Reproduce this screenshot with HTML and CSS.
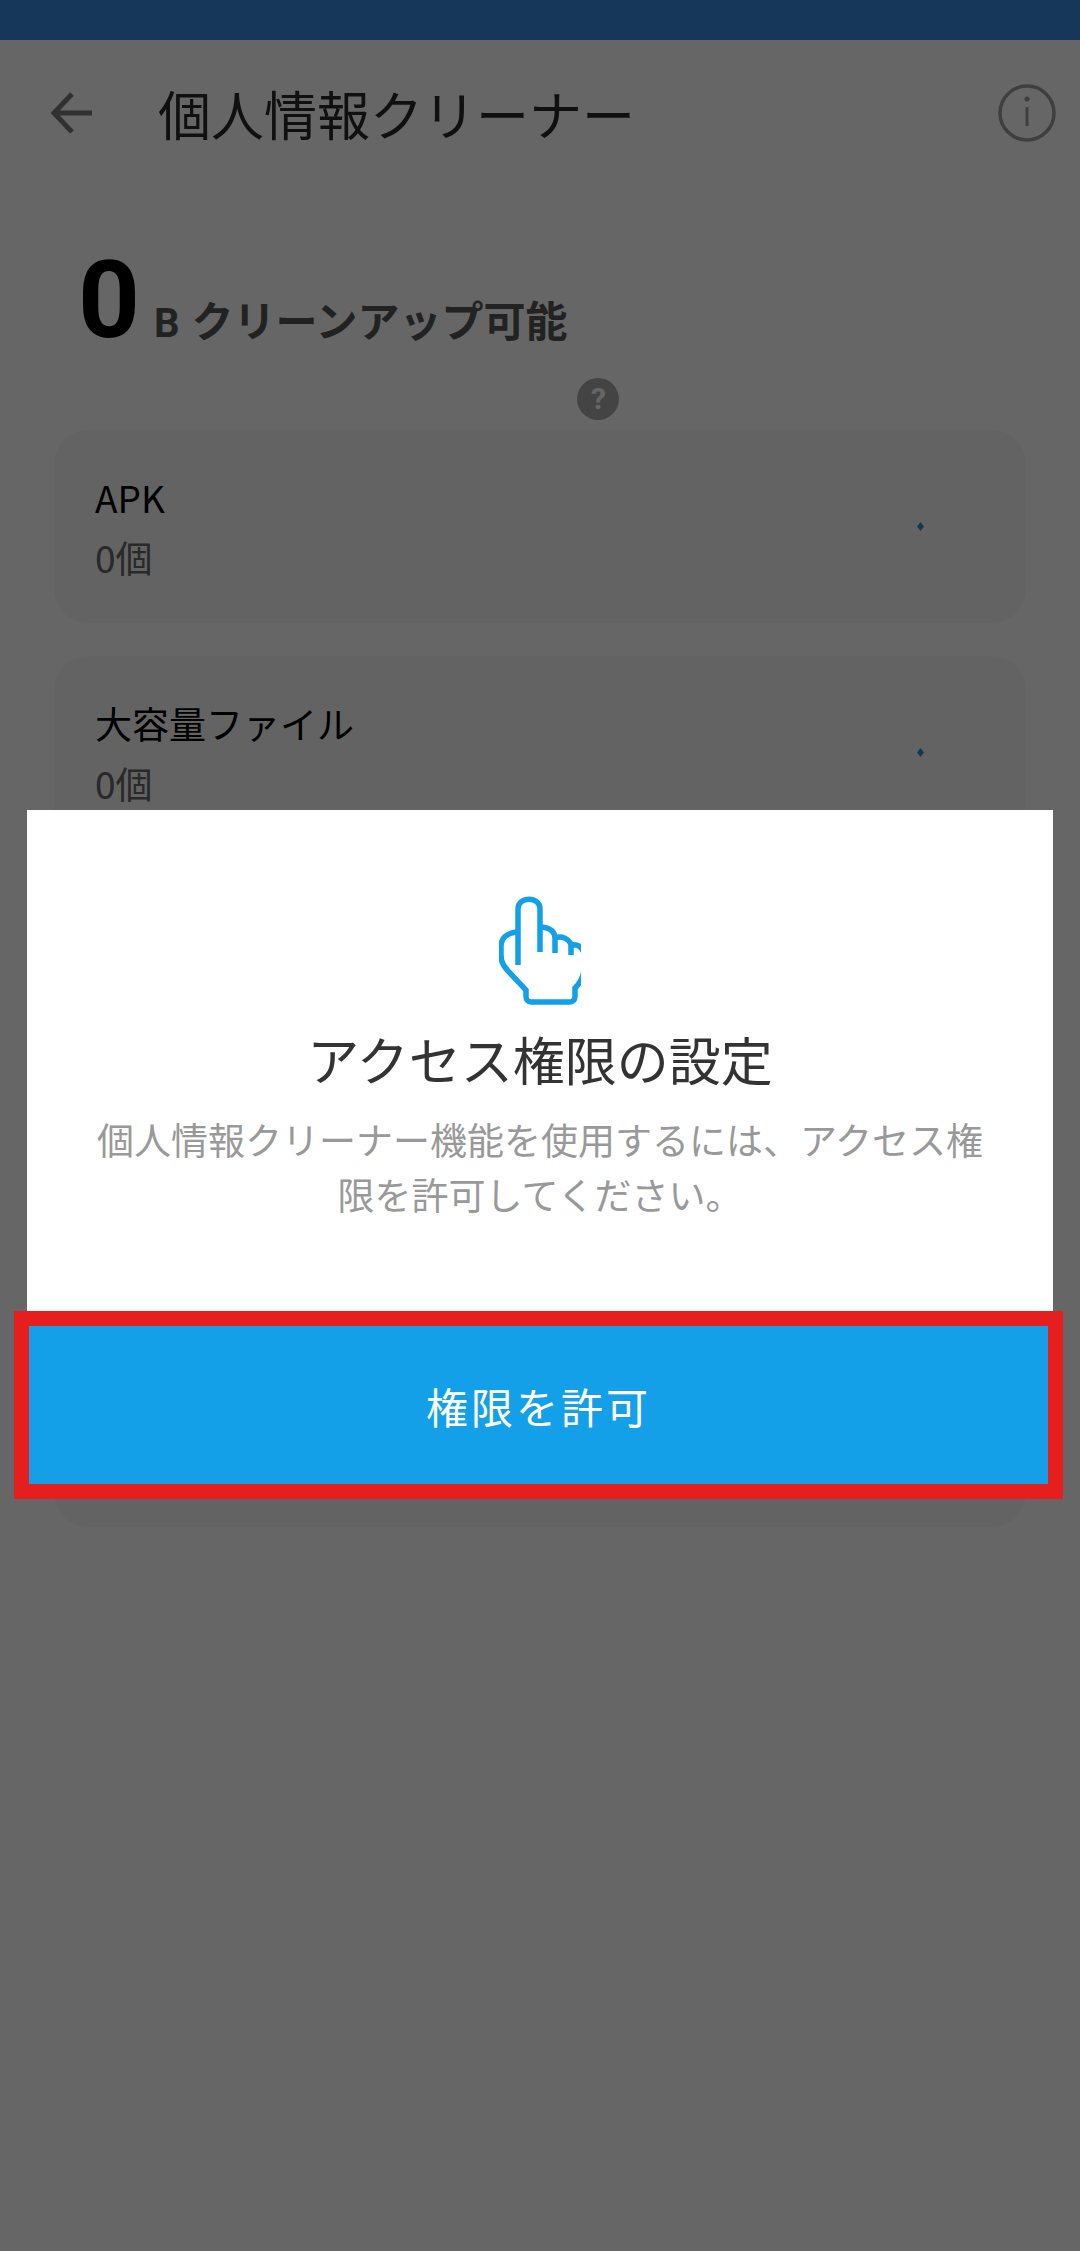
FILE: index.html
```html
<!DOCTYPE html>
<html lang="ja">
<head>
<meta charset="utf-8">
<title>個人情報クリーナー</title>
<link rel="stylesheet" href="styles.css">
</head>
<body>
<div class="page">
  <div class="status"></div>
  <header class="bar">
    <svg class="back" viewBox="0 0 44 44" width="44" height="44"><path d="M42 22H5M22 3 4 22l18 19" fill="none" stroke="#7a7a7a" stroke-width="5"/></svg>
    <h1 class="title">個人情報クリーナー</h1>
    <svg class="info" viewBox="0 0 58 60" width="58" height="60"><circle cx="29" cy="30" r="27" fill="none" stroke="#9e9e9e" stroke-width="3.5"/><circle cx="29" cy="16" r="2.6" fill="#9e9e9e"/><path d="M29 24v19" stroke="#9e9e9e" stroke-width="3"/></svg>
  </header>
  <section class="summary">
    <span class="num">0</span>
    <span class="unit">B</span>
    <span class="label">クリーンアップ可能</span>
    <span class="help">?</span>
  </section>
  <main class="cards">
    <article class="card">
      <div><div class="name">APK</div><div class="count">0個</div></div>
      <i class="dot"></i>
    </article>
    <article class="card">
      <div><div class="name">大容量ファイル</div><div class="count">0個</div></div>
      <i class="dot"></i>
    </article>
    <article class="card"></article>
    <article class="card"></article>
    <article class="card"></article>
  </main>
</div>
<div class="overlay">
  <div class="dialog">
    <svg class="hand" viewBox="0 0 82 112" width="82" height="112" fill="none" stroke="#149fe9" stroke-width="5.5">
      <path d="M23 68V12C23 -1 45 -1 45 12V55M45 30C55 30 60 35 60 41V56M60 41C67 38 74 42 76 48V58M76 48C82 47 88 49 90 60" transform="translate(-4 3)"/>
      <path d="M19 48C9 49 3 54 3 62V70C3 78 5 81 10 87L28 106V112C28 116 30 118 33 118H72C75 118 77 116 77 112V104C82 99 86 92 86 84V63" transform="translate(-1 -10)"/>
    </svg>
    <h2 class="dtitle">アクセス権限の設定</h2>
    <p class="desc">個人情報クリーナー機能を使用するには、アクセス権限を許可してください。</p>
  </div>
  <div class="frame"><button class="allow">権限を許可</button></div>
</div>
</body>
</html>
```
FILE: styles.css
```css
* { box-sizing: border-box; }
html, body { margin: 0; padding: 0; }
body { width: 1080px; height: 2251px; overflow: hidden; background: #fff; font-family: "Noto Sans CJK JP", Roboto, sans-serif; position: relative; }
.page { height: 2251px; }
.status { height: 40px; background: #378ade; }
.bar { display: flex; align-items: center; height: 146px; padding: 0 24px 0 50px; }
.back { flex: none; }
.title { flex: 1; margin: 0 0 0 64px; font-size: 53px; font-weight: 400; color: #2a2a2a; line-height: 70px; white-space: nowrap; }
.info { flex: none; }
.summary { display: flex; align-items: baseline; height: 244px; padding: 54px 0 0 78px; }
.num { font-family: Roboto, sans-serif; font-size: 108px; font-weight: 700; color: #000; line-height: 120px; }
.unit { font-family: Roboto, sans-serif; font-size: 40px; font-weight: 700; color: #555; margin-left: 14px; }
.label { font-size: 42px; font-weight: 700; color: #555; margin-left: 12px; }
.help { align-self: flex-end; width: 42px; height: 42px; margin: 0 0 10px 10px; border-radius: 50%; background: #aaa; color: #fff; font: 700 30px/42px Roboto, sans-serif; text-align: center; }
.cards { display: flex; flex-direction: column; gap: 33px; padding: 0 54px; }
.card { height: 193px; border-radius: 34px; background: #f8f8f8; display: flex; align-items: center; justify-content: space-between; padding: 0 102px 0 41px; }
.name { font-size: 37px; line-height: 50px; color: #000; white-space: nowrap; }
.count { font-size: 37px; line-height: 50px; margin-top: 10px; color: #666; }
.dot { width: 7px; height: 9px; background: #2f8fd0; clip-path: polygon(50% 0, 100% 50%, 50% 100%, 0 50%); }
.overlay { position: absolute; inset: 0; background: rgba(0, 0, 0, .6); padding-top: 810px; }
.dialog { height: 501px; margin: 0 27px; background: #fff; display: flex; flex-direction: column; align-items: center; padding-top: 84px; }
.hand { flex: none; }
.dtitle { margin: 18px 0 0; font-size: 52px; font-weight: 400; line-height: 70px; color: #333; }
.desc { margin: 18px 0 0; padding: 0 68px; font-size: 37px; line-height: 55px; color: #999; text-align: center; }
.frame { margin: 0 17px 0 14px; height: 188px; border: 15px solid #e71e1e; position: relative; }
.allow { display: block; width: 100%; height: 100%; border: 0; padding: 0; background: #149fe9; color: #fff; font: 400 42px "Noto Sans CJK JP", sans-serif; letter-spacing: 3px; }
```
